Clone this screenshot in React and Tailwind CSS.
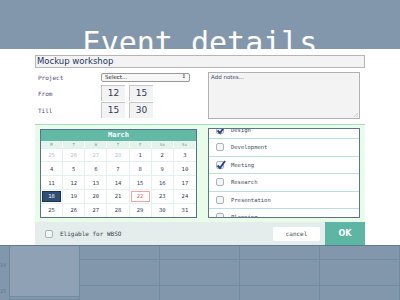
import React from "react";

const weeks = [
  [25, 26, 27, 28, 1, 2, 3],
  [4, 5, 6, 7, 8, 9, 10],
  [11, 12, 13, 14, 15, 16, 17],
  [18, 19, 20, 21, 22, 23, 24],
  [25, 26, 27, 28, 29, 30, 31],
];
const dayNames = ["M", "T", "W", "T", "F", "Sa", "Su"];
const tags = [
  { name: "Design", checked: true },
  { name: "Development", checked: false },
  { name: "Meeting", checked: true },
  { name: "Research", checked: false },
  { name: "Presentation", checked: false },
  { name: "Planning", checked: false },
];

const Box = ({ checked }) => (
  <div className="w-[8px] h-[8px] rounded-[2px] border border-[#a9b3b8] bg-[#f4f4f4] relative shrink-0">
    {checked && (
      <svg viewBox="0 0 10 10" className="absolute -left-[1px] -top-[2px] w-[10px] h-[10px]">
        <path d="M1.5 5.5 L4 8 L9 1" fill="none" stroke="#1f3f8f" strokeWidth="1.8" />
      </svg>
    )}
  </div>
);

const Calendar = () => (
  <div className="w-[157px] border border-[#55738a] bg-white">
    <div className="h-[11px] bg-[#62b9a6] text-white font-bold text-[7px] leading-[11px] text-center">March</div>
    <div className="grid grid-cols-7 h-[7px] bg-[#e4f3ec]">
      {dayNames.map((d, i) => (
        <div key={i} className="text-[4px] leading-[7px] text-center text-[#7d9a8f] border-r border-white">{d}</div>
      ))}
    </div>
    {weeks.map((w, r) => (
      <div key={r} className="grid grid-cols-7 h-[13.8px] border-t border-[#e3f2ec]">
        {w.map((d, c) => {
          const muted = r === 0 && c < 4;
          const sel = r === 3 && c === 0;
          const today = r === 3 && c === 4;
          return (
            <div key={c} className="border-r border-[#e3f2ec] last:border-r-0 p-[1px]">
              <div
                className={
                  sel
                    ? "h-full bg-[#2e5074] border border-[#1b3350] text-white text-[5.5px] flex items-center justify-center"
                    : today
                    ? "h-full border border-[#f3a5a5] text-[#e06a6a] text-[5.5px] flex items-center justify-center"
                    : `h-full text-[5.5px] flex items-center justify-center ${muted ? "text-[#b9c2c6]" : "text-[#2c3e55]"}`
                }
              >
                {d}
              </div>
            </div>
          );
        })}
      </div>
    ))}
  </div>
);

export default function App() {
  return (
    <div className="w-[400px] h-[300px] overflow-hidden bg-[#8397ac] font-['DejaVu_Sans_Mono',monospace]">
      <div className="h-[49px] overflow-hidden text-center">
        <div className="mt-[28px] text-[30px] leading-none text-white">Event details</div>
      </div>

      <div className="bg-white h-[196px] px-[35px] pt-[6px] flex flex-col">
        <div className="h-[13px] border border-[#b5b5b5] bg-[#f3f3f3] px-[1px] text-[8.5px] leading-[11px] text-[#1f3560] font-['DejaVu_Sans',sans-serif]">
          Mockup workshop
        </div>

        <div className="flex mt-[4px] h-[49px]">
          <div className="w-[173px] flex flex-col">
            <div className="flex items-center h-[10px]">
              <div className="w-[66px] pl-[3px] text-[6px] text-[#4f3f7c]">Project</div>
              <div className="w-[89px] h-[9px] border border-[#9a9a9a] rounded-[2px] bg-[#f6f6f6] flex items-center justify-between px-[3px] text-[5.5px] text-[#222] font-['DejaVu_Sans',sans-serif]">
                <span>Select...</span>
                <span className="text-[5px]">&#8597;</span>
              </div>
            </div>
            <div className="flex items-center h-[16px] mt-[3px]">
              <div className="w-[66px] pl-[3px] text-[6px] text-[#4f3f7c]">From</div>
              <div className="flex gap-[4px]">
                <div className="w-[24px] h-[16px] border-t border-l border-[#c6c6c6] bg-[#f3f3f3] text-[9px] leading-[15px] text-center text-[#2a3c5a] font-['DejaVu_Sans',sans-serif]">12</div>
                <div className="w-[24px] h-[16px] border-t border-l border-[#c6c6c6] bg-[#f3f3f3] text-[9px] leading-[15px] text-center text-[#2a3c5a] font-['DejaVu_Sans',sans-serif]">15</div>
              </div>
            </div>
            <div className="flex items-center h-[16px] mt-[1px]">
              <div className="w-[66px] pl-[3px] text-[6px] text-[#4f3f7c]">Till</div>
              <div className="flex gap-[4px]">
                <div className="w-[24px] h-[16px] border-t border-l border-[#c6c6c6] bg-[#f3f3f3] text-[9px] leading-[15px] text-center text-[#2a3c5a] font-['DejaVu_Sans',sans-serif]">15</div>
                <div className="w-[24px] h-[16px] border-t border-l border-[#c6c6c6] bg-[#f3f3f3] text-[9px] leading-[15px] text-center text-[#2a3c5a] font-['DejaVu_Sans',sans-serif]">30</div>
              </div>
            </div>
          </div>
          <div className="w-[152px] h-[47px] border border-[#b0b0b0] bg-[#f3f3f3] px-[2px] text-[5.5px] text-[#44506a] font-['DejaVu_Sans',sans-serif] relative">
            Add notes...
            <svg viewBox="0 0 6 6" className="absolute right-[1px] bottom-[1px] w-[5px] h-[5px]">
              <path d="M6 1 L1 6 M6 4 L4 6" stroke="#aaa" strokeWidth="0.7" />
            </svg>
          </div>
        </div>

        <div className="mt-[3px] border-t border-[#a6dcc7] bg-[#e9fbe9] h-[99px] flex">
          <div className="pl-[5px] pt-[4px] w-[173px]">
            <Calendar />
          </div>
          <div className="mt-[3px] w-[152px] h-[90px] border border-[#5e7587] bg-white overflow-hidden">
            <div className="-mt-[7px]">
              {tags.map((t) => (
                <div key={t.name} className="h-[17.5px] border-b border-[#b9e0da] flex items-center pl-[7px] gap-[7px]">
                  <Box checked={t.checked} />
                  <span className="text-[5.5px] text-[#3c4a5a]">{t.name}</span>
                </div>
              ))}
            </div>
          </div>
        </div>

        <div className="h-[23px] bg-[#e4edeb] flex items-center">
          <div className="ml-[10px]">
            <Box checked={false} />
          </div>
          <span className="ml-[7px] text-[6px] text-[#3b4552]">Eligable for WBSO</span>
          <div className="ml-auto w-[47px] h-[14px] bg-white rounded-[2px] text-[6px] leading-[14px] text-center text-[#3b4552]">cancel</div>
          <div className="ml-[5px] w-[40px] h-[23px] bg-[#5db6a3] text-white font-bold text-[8px] leading-[23px] text-center font-['DejaVu_Sans',sans-serif]">OK</div>
        </div>
      </div>

      <div className="h-[55px] border-t border-[#5e7b90] flex">
        <div className="w-[10px] border-r border-[#6f8da1] relative">
          <span className="absolute left-0 top-[16px] text-[5px] text-[#5a7890]">14</span>
          <span className="absolute left-0 top-[42px] text-[5px] text-[#5a7890]">15</span>
        </div>
        <div className="w-[70px] border-r border-[#6f8da1] flex flex-col">
          <div className="h-[51px] bg-[#8ea1b5] border-b border-[#6f8da1]"></div>
          <div className="mt-[2px] flex-1 bg-[#8ea1b5] border-t border-[#6f8da1]"></div>
        </div>
        {[0, 1, 2, 3].map((i) => (
          <div key={i} className="w-[80px] border-r border-[#6f8da1] flex flex-col">
            <div className="h-[14px] border-b border-[#6f8da1]"></div>
            <div className="h-[26px] border-b border-[#6f8da1]"></div>
          </div>
        ))}
      </div>
    </div>
  );
}
